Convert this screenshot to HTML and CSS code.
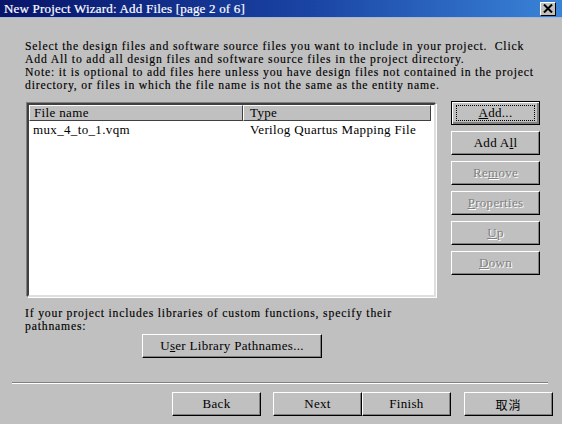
FILE: index.html
```html
<!DOCTYPE html>
<html>
<head>
<meta charset="utf-8">
<link rel="stylesheet" href="styles.css">
</head>
<body>
<div class="window">
  <div class="titlebar">
    <span class="title">New Project Wizard: Add Files [page 2 of 6]</span>
    <span class="close"><svg width="10" height="9" viewBox="0 0 10 9"><path d="M1 0.5 L9 8.5 M9 0.5 L1 8.5" stroke="#000" stroke-width="2"/></svg></span>
  </div>
  <div class="content">
    <p class="intro">Select the design files and software source files you want to include in your project.&nbsp; Click<br>Add All to add all design files and software source files in the project directory.<br>Note: it is optional to add files here unless you have design files not contained in the project<br>directory, or files in which the file name is not the same as the entity name.</p>
    <div class="main">
      <div class="listbox">
        <div class="header">
          <div class="hcell hname">File name</div>
          <div class="hcell htype">Type</div>
        </div>
        <div class="row">
          <span class="cname">mux_4_to_1.vqm</span>
          <span class="ctype">Verilog Quartus Mapping File</span>
        </div>
      </div>
      <div class="side">
        <div class="btn default"><span class="focus"><u>A</u>dd...</span></div>
        <div class="btn">Add A<u>l</u>l</div>
        <div class="btn disabled">Re<u>m</u>ove</div>
        <div class="btn disabled"><u>P</u>roperties</div>
        <div class="btn disabled"><u>U</u>p</div>
        <div class="btn disabled"><u>D</u>own</div>
      </div>
    </div>
    <p class="libs">If your project includes libraries of custom functions, specify their<br>pathnames:</p>
    <div class="librow"><div class="btn libbtn">U<u>s</u>er Library Pathnames...</div></div>
  </div>
  <div class="sep"></div>
  <div class="footer">
    <div class="btn fbtn">Back</div>
    <div class="pair">
      <div class="btn fbtn">Next</div>
      <div class="btn fbtn">Finish</div>
    </div>
    <div class="btn fbtn cancel">取消</div>
  </div>
</div>
</body>
</html>
```
FILE: styles.css
```css
* { box-sizing: border-box; }
html, body { margin: 0; padding: 0; }
body {
  width: 562px;
  height: 424px;
  background: #c0c0c0;
  font-family: "Liberation Serif", "Noto Sans CJK TC", serif;
  font-size: 13px;
  letter-spacing: 0.35px;
  color: #000;
  overflow: hidden;
}
.window { width: 562px; height: 424px; display: flex; flex-direction: column; }
.titlebar {
  height: 18px;
  background: linear-gradient(to right, #08146a 0%, #1a44a4 55%, #3a84d8 100%);
  display: flex;
  align-items: center;
  justify-content: space-between;
  padding: 0 6px 0 4px;
  border-bottom: 1px solid #a8b8d0;
}
.title { color: #fff; font-size: 13px; letter-spacing: 0.2px; -webkit-text-stroke: 0.2px #fff; }
.close {
  width: 16px; height: 14px;
  background: #c0c0c0;
  border-top: 1px solid #fff; border-left: 1px solid #fff;
  border-right: 1px solid #000; border-bottom: 1px solid #000;
  display: flex; align-items: center; justify-content: center;
}
.content { padding: 22px 0 0 25px; }
.intro, .libs {
  margin: 0;
  font-size: 11.7px;
  letter-spacing: 0.82px;
  line-height: 13px;
  white-space: nowrap;
  -webkit-text-stroke: 0.15px #000;
}
.main { display: flex; margin-top: 11px; margin-left: 2px; }
.listbox {
  width: 409px; height: 194px;
  background: #fff;
  border-top: 2px solid #404040; border-left: 2px solid #404040;
  border-right: 2px solid #dfdfdf; border-bottom: 2px solid #dfdfdf;
  box-shadow: -1px -1px 0 #808080, 1px 1px 0 #fff;
}
.header { display: flex; height: 16px; padding-right: 3px; }
.hcell {
  background: #c0c0c0;
  border-top: 1px solid #fff; border-left: 1px solid #fff;
  border-right: 1px solid #404040; border-bottom: 1px solid #404040;
  line-height: 14px; padding-left: 4px;
}
.hname { width: 214px; }
.htype { flex: 1; padding-left: 6px; }
.row { display: flex; line-height: 14px; padding-top: 2px; }
.cname { width: 214px; padding-left: 4px; }
.ctype { padding-left: 7px; }
.side { display: flex; flex-direction: column; gap: 6px; margin-left: 15px; margin-top: -2px; }
.btn {
  width: 89px; height: 24px;
  background: #c0c0c0;
  border-top: 1px solid #fff; border-left: 1px solid #fff;
  border-right: 1px solid #000; border-bottom: 1px solid #000;
  box-shadow: inset -1px -1px 0 #808080;
  display: flex; align-items: center; justify-content: center;
  font-size: 13px;
  letter-spacing: 0.3px;
}
.btn.default { border: 1px solid #000; box-shadow: inset 1px 1px 0 #fff, inset -2px -2px 0 #808080; }
.focus { border: 1px dotted #000; width: 79px; height: 16px; display: flex; align-items: center; justify-content: center; }
.btn.disabled { color: #808080; text-shadow: 1px 1px 0 #fff; }
.libs { margin-top: 10px; }
.librow { padding-left: 117px; margin-top: 1px; }
.libbtn { width: 180px; }
.sep {
  margin: 24px 14px 0 12px;
  height: 2px;
  border-top: 1px solid #808080;
  border-bottom: 1px solid #fff;
}
.footer { display: flex; padding-left: 172px; margin-top: 8px; gap: 12px; }
.pair { display: flex; }
.cancel { font-family: "Noto Sans CJK TC", sans-serif; font-size: 12px; margin-left: 1px; letter-spacing: 1px; }
```
